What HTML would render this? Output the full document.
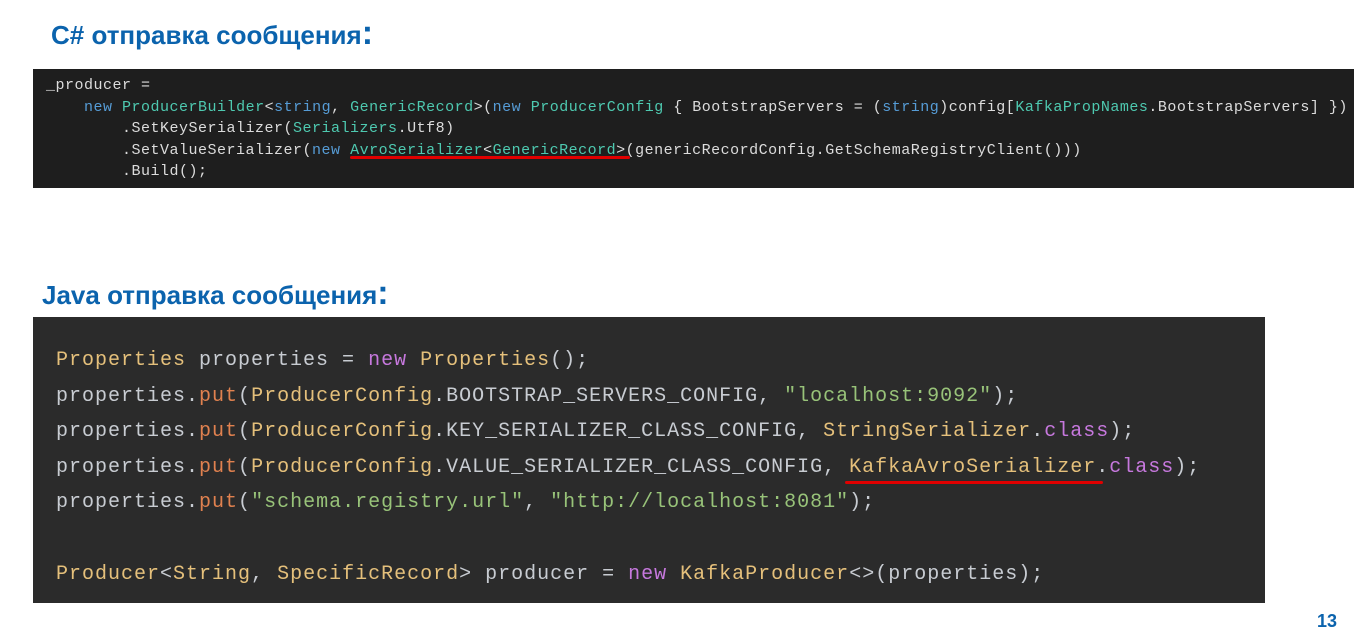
<!DOCTYPE html>
<html><head><meta charset="utf-8"><style>
body{margin:0;width:1368px;height:640px;background:#fff;position:relative;overflow:hidden;font-family:"Liberation Sans",sans-serif}
.t{position:absolute;color:#0b63ad;font-weight:bold;font-size:26px;white-space:nowrap}
.t b{font-size:34px;line-height:0}
.box{position:absolute}
pre{margin:0;font-family:"Liberation Mono","DejaVu Sans Mono",monospace;white-space:pre}
#cs{left:33px;top:69px;width:1321px;height:119px;background:#1e1e1e}
#cs pre{position:absolute;left:13px;top:6px;font-size:15px;letter-spacing:0.5px;line-height:21.5px;color:#dcdcdc}
.k{color:#569cd6}.ty{color:#4ec9b0}
#jv{left:33px;top:317px;width:1232px;height:286px;background:#2b2b2b}
#jv pre{position:absolute;left:23px;top:26px;font-size:20px;letter-spacing:1.0px;line-height:35.6px;color:#c8ccd2}
.y{color:#e5c07b}.o{color:#e0814f}.p{color:#c678dd}.g{color:#98c379}
.u{position:absolute;height:3px;background:#e00000;border-radius:2px}
</style></head><body>
<div class="t" style="left:51px;top:20px">C# отправка сообщения<b>:</b></div>
<div class="box" id="cs"><pre>_producer =
    <span class="k">new</span> <span class="ty">ProducerBuilder</span>&lt;<span class="k">string</span>, <span class="ty">GenericRecord</span>&gt;(<span class="k">new</span> <span class="ty">ProducerConfig</span> { BootstrapServers = (<span class="k">string</span>)config[<span class="ty">KafkaPropNames</span>.BootstrapServers] })
        .SetKeySerializer(<span class="ty">Serializers</span>.Utf8)
        .SetValueSerializer(<span class="k">new</span> <span class="ty">AvroSerializer</span>&lt;<span class="ty">GenericRecord</span>&gt;(genericRecordConfig.GetSchemaRegistryClient()))
        .Build();</pre></div>
<div class="u" style="left:350px;top:156px;width:280px"></div>
<div class="t" style="left:42px;top:280px">Java отправка сообщения<b>:</b></div>
<div class="box" id="jv"><pre><span class="y">Properties</span> properties = <span class="p">new</span> <span class="y">Properties</span>();
properties.<span class="o">put</span>(<span class="y">ProducerConfig</span>.BOOTSTRAP_SERVERS_CONFIG, <span class="g">"localhost:9092"</span>);
properties.<span class="o">put</span>(<span class="y">ProducerConfig</span>.KEY_SERIALIZER_CLASS_CONFIG, <span class="y">StringSerializer</span>.<span class="p">class</span>);
properties.<span class="o">put</span>(<span class="y">ProducerConfig</span>.VALUE_SERIALIZER_CLASS_CONFIG, <span class="y">KafkaAvroSerializer</span>.<span class="p">class</span>);
properties.<span class="o">put</span>(<span class="g">"schema.registry.url"</span>, <span class="g">"http://localhost:8081"</span>);

<span class="y">Producer</span>&lt;<span class="y">String</span>, <span class="y">SpecificRecord</span>&gt; producer = <span class="p">new</span> <span class="y">KafkaProducer</span>&lt;&gt;(properties);</pre></div>
<div class="u" style="left:845px;top:481px;width:258px"></div>
<div style="position:absolute;left:1317px;top:611px;color:#0b63ad;font-weight:bold;font-size:18px">13</div>
</body></html>
